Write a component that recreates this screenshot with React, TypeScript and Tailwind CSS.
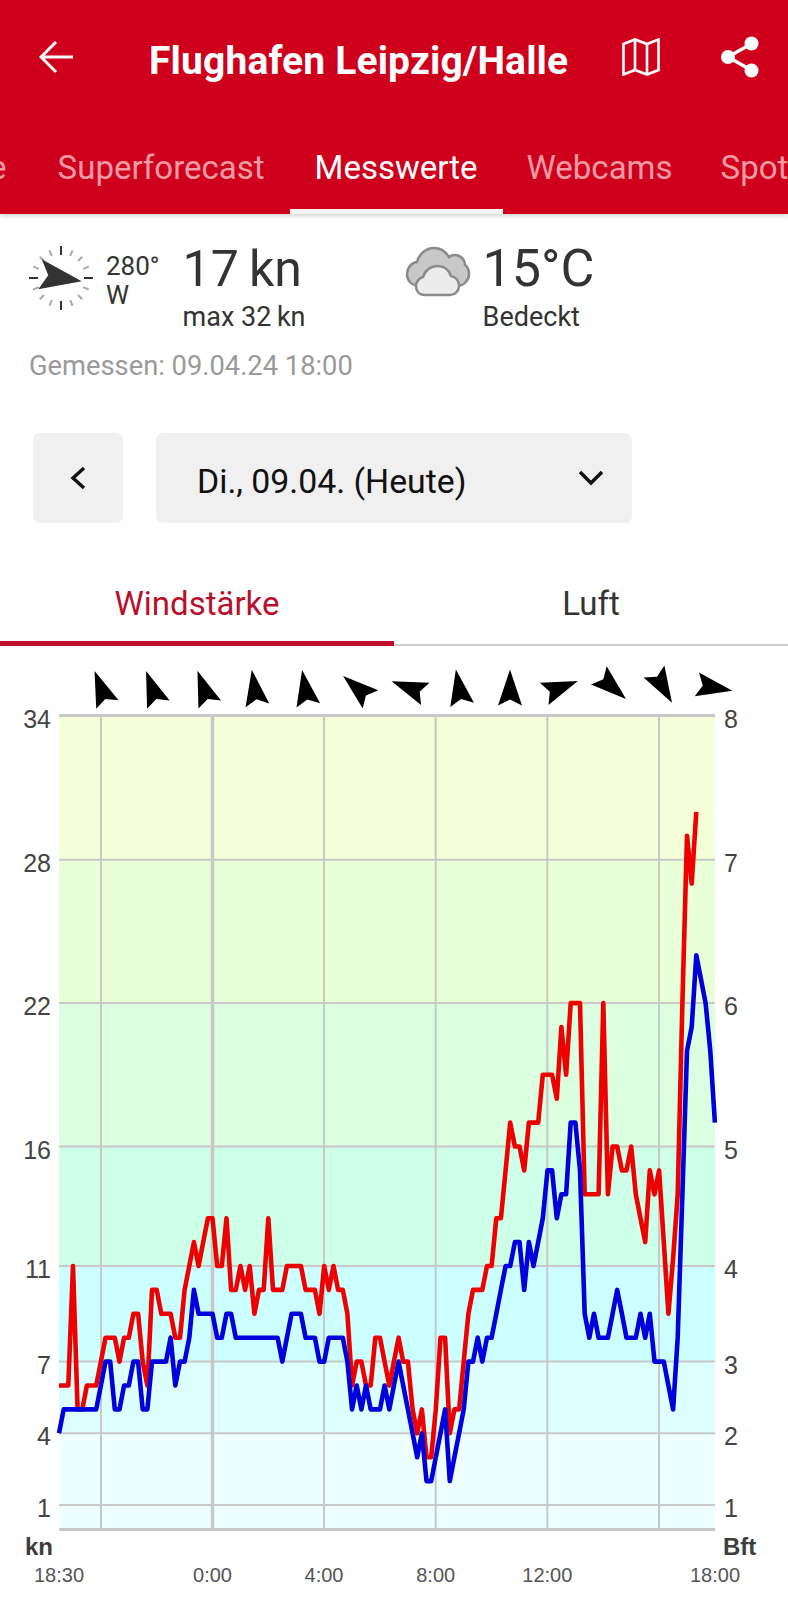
const RED = [
  6, 6, 6, 11, 5, 5, 6, 6, 6, 7, 8, 8, 8, 7, 8, 8, 9, 9, 7, 6, 10, 10, 9, 9, 9, 8, 8, 10, 11, 12, 11, 12, 13, 13, 11, 11, 13, 10, 10, 11,
  10, 11, 9, 10, 10, 13, 10, 10, 10, 11, 11, 11, 11, 10, 10, 10, 9, 11, 10, 11, 10, 10, 9, 6, 7, 7, 6, 6, 8, 8, 7, 6, 7, 8, 7, 7, 5, 4, 5, 3,
  3, 5, 8, 8, 4, 5, 5, 7, 9, 10, 10, 10, 11, 11, 13, 13, 15, 17, 16, 16, 15, 17, 17, 17, 19, 19, 19, 18, 21, 19, 22, 22, 22, 14, 14, 14, 14, 22, 14, 16,
  16, 15, 15, 16, 14, 13, 12, 15, 14, 15, 12, 9, 11.3, 14, 22, 29, 27, 30,
];

const BLUE = [
  4, 5, 5, 5, 5, 5, 5, 5, 5, 6, 7, 7, 5, 5, 6, 6, 7, 7, 5, 5, 7, 7, 7, 7, 8, 6, 7, 7, 8, 10, 9, 9, 9, 9, 8, 8, 9, 9, 8, 8,
  8, 8, 8, 8, 8, 8, 8, 8, 7, 8, 9, 9, 9, 8, 8, 8, 7, 7, 8, 8, 8, 8, 7, 5, 6, 5, 6, 5, 5, 5, 6, 5, 6, 7, 6, 5, 4, 3, 4, 2,
  2, 3, 4, 5, 2, 3, 4, 5, 7, 7, 8, 7, 8, 8, 9, 10, 11, 11, 12, 12, 10, 12, 11, 12, 13, 15, 15, 13, 14, 14, 17, 17, 15, 9, 8, 9, 8, 8, 8, 9,
  10, 9, 8, 8, 8, 9, 8, 9, 7, 7, 7, 6, 5, 8, 14, 20, 21, 24, 23, 22, 20, 17,
];

const BANDS = [
  { from: 34, to: 28, color: "#f4ffd9" },
  { from: 28, to: 22, color: "#e8ffd8" },
  { from: 22, to: 16, color: "#dcffe2" },
  { from: 16, to: 11, color: "#ceffe8" },
  { from: 11, to: 7, color: "#ccffff" },
  { from: 7, to: 4, color: "#ddffff" },
  { from: 4, to: 0, color: "#eeffff" },
];

const LEFT_TICKS = [34, 28, 22, 16, 11, 7, 4, 1];
const RIGHT_TICKS = [8, 7, 6, 5, 4, 3, 2, 1];
const GRID_X = [101, 212.5, 324, 435.7, 547.3, 659];
const TIMES = [
  { label: "18:30", x: 59 },
  { label: "0:00", x: 212.5 },
  { label: "4:00", x: 324 },
  { label: "8:00", x: 435.7 },
  { label: "12:00", x: 547.3 },
  { label: "18:00", x: 715 },
];

const ARROWS = [
  { x: 101, y: 687.7, r: -21 },
  { x: 152.2, y: 687.8, r: -20 },
  { x: 203.6, y: 687.6, r: -20 },
  { x: 254.6, y: 687.5, r: -9 },
  { x: 305.2, y: 687.7, r: -10 },
  { x: 356.8, y: 687.6, r: -49.5 },
  { x: 408.4, y: 687.6, r: -69.6 },
  { x: 459, y: 687.2, r: -10 },
  { x: 510, y: 687.5, r: 0 },
  { x: 561, y: 687.4, r: 69 },
  { x: 612.4, y: 687.2, r: 131 },
  { x: 663, y: 687.2, r: 150 },
  { x: 714.6, y: 687.5, r: 100 },
];

const kn = (v: number) => 1505 - (v - 1) * 23.9;
const points = (values: number[]) =>
  values.map((v, i) => `${(59 + i * 4.652).toFixed(1)},${kn(v).toFixed(1)}`).join(" ");

function WindChart() {
  return (
    <svg width="788" height="954" viewBox="0 646 788 954" className="block font-['Liberation_Sans',sans-serif]">
      {BANDS.map((b) => (
        <rect key={b.from} x="59" y={kn(b.from)} width="656" height={Math.min(kn(b.to), 1529) - kn(b.from)} fill={b.color} />
      ))}

      {LEFT_TICKS.slice(1).map((t) => (
        <line key={t} x1="59" x2="715" y1={kn(t)} y2={kn(t)} stroke="#c8c8c8" strokeWidth="2" />
      ))}
      {GRID_X.map((x, i) => (
        <line key={x} x1={x} x2={x} y1="716" y2="1529" stroke="#c8c8c8" strokeWidth={i === 1 ? 3.5 : 2} />
      ))}
      <line x1="59" x2="715" y1="715.5" y2="715.5" stroke="#c8c8c8" strokeWidth="3" />
      <line x1="59" x2="715" y1="1529.5" y2="1529.5" stroke="#c8c8c8" strokeWidth="3" />

      <polyline points={points(RED)} fill="none" stroke="#ee0000" strokeWidth="4.6" strokeLinejoin="round" />
      <polyline points={points(BLUE)} fill="none" stroke="#0000dd" strokeWidth="4.6" strokeLinejoin="round" />

      {ARROWS.map((a) => (
        <polygon
          key={a.x}
          points="0,-18 12,18 0,12 -12,18"
          fill="#000000"
          transform={`translate(${a.x} ${a.y}) rotate(${a.r})`}
        />
      ))}

      {LEFT_TICKS.map((t) => (
        <text key={t} x="51" y={kn(t) + 12} textAnchor="end" fontSize="25" fill="#444444">
          {t}
        </text>
      ))}
      {RIGHT_TICKS.map((t, i) => (
        <text key={t} x="724" y={kn(LEFT_TICKS[i]) + 12} fontSize="25" fill="#444444">
          {t}
        </text>
      ))}
      <text x="25" y="1555" fontSize="24" fontWeight="700" fill="#3d3d3d">
        kn
      </text>
      <text x="723" y="1555" fontSize="24" fontWeight="700" fill="#3d3d3d">
        Bft
      </text>
      {TIMES.map((t) => (
        <text key={t.label} x={t.x} y="1582" textAnchor="middle" fontSize="20" fill="#555555">
          {t.label}
        </text>
      ))}
    </svg>
  );
}

function CompassIcon() {
  const ticks = Array.from({ length: 16 }, (_, i) => i * 22.5);
  return (
    <svg width="66" height="66" viewBox="-33 -33 66 66" className="shrink-0">
      {ticks.map((deg) =>
        deg % 90 === 0 ? (
          <line key={deg} x1="0" x2="0" y1="-32" y2="-23" stroke="#333333" strokeWidth="2" transform={`rotate(${deg})`} />
        ) : (
          <line key={deg} x1="0" x2="0" y1="-30" y2="-24" stroke="#aaaaaa" strokeWidth="2" transform={`rotate(${deg})`} />
        ),
      )}
      <polygon points="20.7,3.2 -19.3,-18.8 -12.7,-2.8 -22.7,11.2" fill="#333333" />
    </svg>
  );
}

function CloudIcon() {
  return (
    <svg width="66" height="52" viewBox="0 0 66 52" className="shrink-0">
      <path
        d="M15 41C6 41 2 35 2 29c0-6 4-11 10-12 2-8 9-14 17-14 7 0 12 4 15 9 2-2 4-2 6-2 6 0 10 5 10 10 3 2 4 5 4 9 0 6-5 12-12 12Z"
        fill="#c8c8c8"
        stroke="#8a8a8a"
        strokeWidth="2.5"
      />
      <path
        d="M20 50c-6 0-9-4-9-9 0-4 3-8 7-9 2-7 8-11 14-11 7 0 12 4 14 10 5 1 8 5 8 10 0 5-4 9-9 9Z"
        fill="#ececec"
        stroke="#8a8a8a"
        strokeWidth="2.5"
      />
    </svg>
  );
}

function MapIcon() {
  return (
    <svg width="38" height="38" viewBox="0 0 38 38" fill="none" stroke="#ffffff" strokeWidth="2.6" className="shrink-0">
      <path d="M1.5 6 13 1.5 25 6 36.5 1.5V32L25 36.5 13 32 1.5 36.5Z" />
      <path d="M13 1.5V32M25 6V36.5" />
    </svg>
  );
}

function ShareIcon() {
  return (
    <svg width="38" height="42" viewBox="0 0 38 42" className="shrink-0">
      <path d="M30 8 7 21l23 13" fill="none" stroke="#ffffff" strokeWidth="3.4" />
      <circle cx="30.5" cy="7.5" r="7" fill="#ffffff" />
      <circle cx="7" cy="21" r="7" fill="#ffffff" />
      <circle cx="30.5" cy="34.5" r="7" fill="#ffffff" />
    </svg>
  );
}

export default function App() {
  return (
    <div className="min-h-[1600px] w-[788px] overflow-hidden bg-white font-['Roboto',sans-serif]">
      <header className="h-[214px] bg-[#cf001c] shadow-[0_2px_5px_rgba(0,0,0,0.18)]">
        <div className="flex h-[114px] items-center">
          <svg width="34" height="34" viewBox="0 0 34 34" fill="none" stroke="#ffffff" strokeWidth="3" className="ml-[39px] shrink-0">
            <path d="M34 17H3M17 2 2 17l15 15" />
          </svg>
          <h1 className="ml-[76px] w-[418px] shrink-0 pt-[7px] text-center text-[39px] leading-[44px] font-bold tracking-[0.15px] whitespace-nowrap text-white">
            Flughafen Leipzig/Halle
          </h1>
          <div className="ml-[55px]">
            <MapIcon />
          </div>
          <div className="ml-[61px]">
            <ShareIcon />
          </div>
        </div>
        <nav className="flex h-[100px] text-[33px] leading-[40px] whitespace-nowrap text-[#f49aa5]">
          <span className="ml-[-160px] pt-[34px] pr-[23px] pl-[26px]">Prognose</span>
          <span className="pt-[34px] pr-[25px] pl-[28px]">Superforecast</span>
          <span className="h-[100px] border-b-[5px] border-[#f4f4f4] px-[25px] pt-[34px] text-white">Messwerte</span>
          <span className="pt-[34px] pr-[24px] pl-[24px]">Webcams</span>
          <span className="pt-[34px] pl-[24px]">Spot</span>
        </nav>
      </header>

      <section className="h-[186px] text-[#333333]">
        <div className="flex pt-[31px] pl-[28px]">
          <CompassIcon />
          <div className="ml-[12px] pt-[7px] text-[26px] leading-[29px]">
            <div>280°</div>
            <div>W</div>
          </div>
          <div className="ml-[23px] w-[222px]">
            <div className="text-[50px] leading-[48px]">17&thinsp;kn</div>
            <div className="mt-[9px] text-[27px] leading-[30px]">max 32&thinsp;kn</div>
          </div>
          <CloudIcon />
          <div className="ml-[12px]">
            <div className="text-[52px] leading-[48px]">15°C</div>
            <div className="mt-[9px] text-[27px] leading-[30px]">Bedeckt</div>
          </div>
        </div>
        <p className="mt-[18px] pl-[29px] text-[27.3px] leading-[32px] text-[#9a9a9a]">Gemessen: 09.04.24 18:00</p>
      </section>

      <div className="mt-[33px] flex h-[90px] gap-[33px] pl-[33px]">
        <button className="flex w-[90px] items-center justify-center rounded-[7px] bg-[#f0f0f0]">
          <svg width="16" height="24" viewBox="0 0 16 24" fill="none" stroke="#111111" strokeWidth="3.4">
            <path d="M14 2 3 12l11 10" />
          </svg>
        </button>
        <button className="flex w-[476px] items-center justify-between rounded-[7px] bg-[#f0f0f0] pr-[28px] pl-[41px]">
          <span className="pt-[7px] text-[33.8px] leading-[40px] text-[#111111]">Di., 09.04. (Heute)</span>
          <svg width="26" height="16" viewBox="0 0 26 16" fill="none" stroke="#111111" strokeWidth="3.4">
            <path d="M2 2l11 11L24 2" />
          </svg>
        </button>
      </div>

      <div className="flex h-[123px] border-b-[2px] border-[#cccccc] text-[33px] leading-[40px]">
        <div className="mb-[-2px] flex h-[123px] w-[394px] justify-center border-b-[5px] border-[#c00d2a] pt-[61px] text-[#b8102c]">
          Windstärke
        </div>
        <div className="flex w-[394px] justify-center pt-[61px] text-[#333333]">Luft</div>
      </div>

      <WindChart />
    </div>
  );
}
